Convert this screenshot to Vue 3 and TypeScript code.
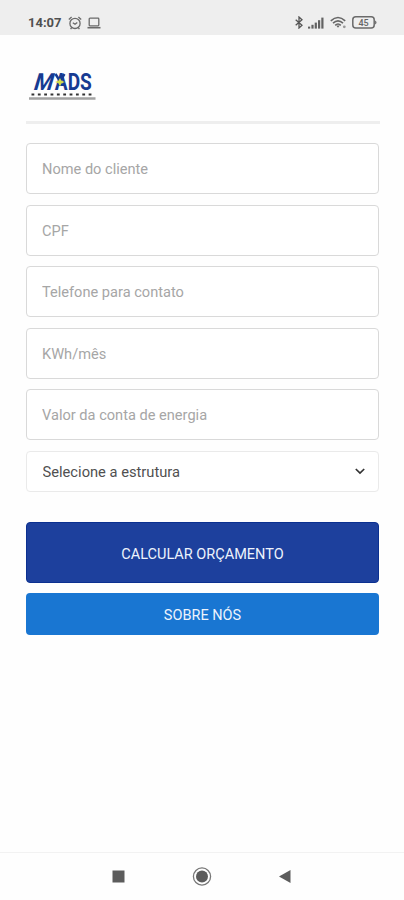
<script setup lang="ts">
import { reactive, ref } from 'vue'

interface Field {
  key: string
  label: string
}

const fields: Field[] = [
  { key: 'nome', label: 'Nome do cliente' },
  { key: 'cpf', label: 'CPF' },
  { key: 'telefone', label: 'Telefone para contato' },
  { key: 'consumo', label: 'KWh/mês' },
  { key: 'valor', label: 'Valor da conta de energia' },
]

const form = reactive<Record<string, string>>({ nome: '', cpf: '', telefone: '', consumo: '', valor: '' })
const structure = ref('')
</script>

<template>
  <div class="screen">
    <header class="status">
      <div class="status-group">
        <span class="time">14:07</span>
        <svg class="alarm" width="14" height="14" viewBox="0 0 14 14" fill="none" stroke="#6a6a6a" stroke-width="1.3">
          <circle cx="7" cy="7.4" r="5.1" />
          <path d="M0.8 3.4 3.6 1M13.2 3.4 10.4 1M2.6 13.1l1.2-1.7M11.4 13.1l-1.2-1.7M4.8 6.7 7 8.3l2.3-1.8" />
        </svg>
        <svg class="laptop" width="14" height="12" viewBox="0 0 14 12" fill="none" stroke="#6a6a6a" stroke-width="1.3">
          <rect x="2.2" y="1.2" width="9.6" height="7.6" rx="0.8" />
          <path d="M0.5 10.7h13" stroke-width="1.6" />
        </svg>
      </div>
      <div class="status-group">
        <svg class="bluetooth" width="8" height="13" viewBox="0 0 8 13" fill="none" stroke="#555" stroke-width="1.3">
          <path d="M0.7 3.7 7 9.2 4 12V1l3 2.8L0.7 9.3" />
        </svg>
        <svg class="signal" width="16" height="12" viewBox="0 0 16 12" fill="#626262">
          <rect x="0" y="9.6" width="2.2" height="2" />
          <rect x="3.4" y="7.8" width="2.2" height="3.8" />
          <rect x="6.7" y="5.6" width="2.2" height="6" />
          <rect x="10" y="3.2" width="2.2" height="8.4" />
          <rect x="13.3" y="0.6" width="2.2" height="11" />
        </svg>
        <svg class="wifi" width="17" height="13" viewBox="0 0 17 13" fill="none" stroke="#666" stroke-width="1.6">
          <path d="M0.8 4.8Q8-1.8 15.2 4.8M3 7.1Q8 2.5 13 7.1M5.2 9.3Q8 6.7 10.8 9.3" />
          <path d="M6.2 9.4h3.6L8 11.8z" fill="#666" stroke="none" />
          <circle cx="14.3" cy="10.8" r="1.4" fill="#999" stroke="none" />
        </svg>
        <svg class="battery" width="25" height="13" viewBox="0 0 25 13">
          <rect x="0.8" y="0.8" width="21.4" height="11.2" rx="3" fill="none" stroke="#6a6a6a" stroke-width="1.5" />
          <path d="M23 4.5q1.5 0.3 1.5 2t-1.5 2z" fill="#777" />
          <text x="11.5" y="9.6" text-anchor="middle" class="charge">45</text>
        </svg>
      </div>
    </header>

    <main class="content">
      <div class="brand">
        <svg class="logo" width="70" height="34" viewBox="0 0 70 34" role="img" aria-label="MADS">
          <g class="logo-letters">
            <text transform="translate(4.5 22.8) skewX(-17)" textLength="19" lengthAdjust="spacingAndGlyphs">M</text>
            <text x="26.8" y="22.8" textLength="37" lengthAdjust="spacingAndGlyphs">ADS</text>
          </g>
          <path d="M27.5 7 31.5 13.5M36.5 7 32 14" fill="none" stroke="#173b92" stroke-width="2.4" />
          <path d="M32 11 33.4 13.8 37 15 33.4 16.2 32 19.5 30.4 16.2 27 15 30.4 13.8z" fill="#d3dc49" />
          <path d="M3.5 27.5h60" stroke="#333" stroke-width="2" stroke-dasharray="2.8 3.55" />
          <path d="M1 31.5h66.5" stroke="#a2a2a2" stroke-width="2.4" />
        </svg>
      </div>

      <form class="form" @submit.prevent>
        <input
          v-for="field in fields"
          :key="field.key"
          v-model="form[field.key]"
          class="field"
          :placeholder="field.label"
        />
        <div class="select-wrap">
          <select v-model="structure" class="select">
            <option value="">Selecione a estrutura</option>
          </select>
          <svg class="chevron" width="10" height="7" viewBox="0 0 10 7" fill="none" stroke="#333" stroke-width="1.7">
            <path d="M0.8 1 5 5.1 9.2 1" />
          </svg>
        </div>
        <button class="btn primary" type="submit">CALCULAR ORÇAMENTO</button>
        <button class="btn secondary" type="button">SOBRE NÓS</button>
      </form>
    </main>

    <nav class="navbar">
      <svg width="83" height="24" viewBox="0 0 83 24"><rect x="35.5" y="5.5" width="12" height="12" fill="#5c5c5c" /></svg>
      <svg width="84" height="24" viewBox="0 0 84 24">
        <circle cx="42" cy="11.5" r="8.6" fill="none" stroke="#777" stroke-width="1.3" />
        <circle cx="42" cy="11.5" r="6" fill="#5c5c5c" />
      </svg>
      <svg width="83" height="24" viewBox="0 0 83 24"><path d="M35 11.5 46.5 5v13z" fill="#5c5c5c" /></svg>
    </nav>
  </div>
</template>

<style>
body {
  background: #fefefe;
}
</style>

<style scoped>
.screen {
  display: flex;
  flex-direction: column;
  width: 404px;
  height: 900px;
  box-sizing: border-box;
  background: #fefefe;
  font-family: Roboto, "Liberation Sans", sans-serif;
}
.status {
  display: flex;
  justify-content: space-between;
  height: 34.5px;
  box-sizing: border-box;
  padding: 10px 27px 0 28px;
  background: #eee;
}
.status-group {
  display: flex;
  align-items: center;
  height: 25px;
}
.time {
  font-size: 13px;
  font-weight: 700;
  color: #505050;
}
.alarm {
  margin-left: 6px;
}
.laptop {
  margin-left: 5px;
}
.bluetooth {
  margin-right: -1px;
}
.signal {
  margin-left: 6px;
}
.wifi {
  margin-left: 6px;
}
.battery {
  margin-left: 5px;
}
.charge {
  font-size: 9px;
  font-weight: 500;
  fill: #666;
}
.content {
  flex: 1;
  padding: 32.5px 25px 0 26px;
}
.brand {
  height: 53.5px;
  border-bottom: 3px solid #eee;
  margin: 0 -1px 0 0;
}
.logo {
  display: block;
  margin-left: 2px;
  overflow: visible;
}
.logo-letters {
  font-family: Roboto, sans-serif;
  font-size: 23.5px;
  font-weight: 700;
  fill: #173b92;
}
.form {
  display: flex;
  flex-direction: column;
  padding-top: 19.5px;
}
.field {
  width: 100%;
  height: 51px;
  box-sizing: border-box;
  margin: 0 0 10.5px;
  padding: 1px 15px 0;
  border: 1px solid #d9d9d9;
  border-radius: 4px;
  background: #fff;
  font: 400 14.6px Roboto, sans-serif;
  outline: none;
}
.field::placeholder {
  color: #a6a6a6;
  opacity: 1;
}
.select-wrap {
  position: relative;
  height: 41.5px;
}
.select {
  width: 100%;
  height: 41.5px;
  padding: 1px 15.5px 0;
  border: 1px solid #eaeaea;
  border-radius: 4px;
  appearance: none;
  background: #fff;
  color: #505050;
  font: 400 14.7px Roboto, sans-serif;
}
.chevron {
  position: absolute;
  right: 14px;
  top: 17.5px;
}
.btn {
  width: 100%;
  border: 0;
  border-radius: 4px;
  color: #edf3fc;
  font: 400 14.5px Roboto, sans-serif;
  padding: 3px 0 0;
}
.primary {
  height: 61px;
  margin-top: 30px;
  background: #1d409d;
  border: 1px solid #0b3090;
}
.secondary {
  height: 41.5px;
  margin-top: 10px;
  background: #1976d2;
}
.navbar {
  display: flex;
  justify-content: center;
  align-items: center;
  height: 48px;
  box-sizing: border-box;
  border-top: 1px solid #f2f2f2;
}
</style>
